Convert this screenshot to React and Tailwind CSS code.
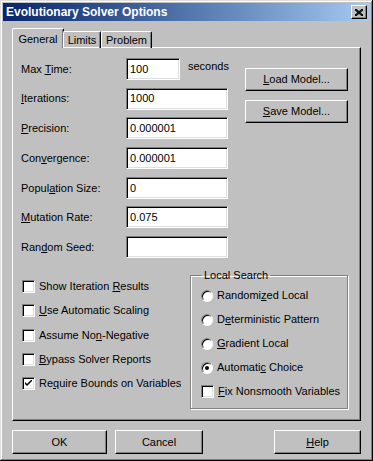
import React from "react";

const raised =
  "border border-t-white border-l-white border-r-black border-b-black shadow-[inset_-1px_-1px_0_#808080]";
const sunken =
  "border border-t-[#808080] border-l-[#808080] border-r-white border-b-white shadow-[inset_1px_1px_0_#000,inset_-1px_-1px_0_#dfdfdf]";

const Btn = ({ children, className = "" }) => (
  <div
    className={`${raised} bg-[#c0c0c0] flex items-center justify-center text-black ${className}`}
  >
    {children}
  </div>
);

const Field = ({ label, value, width = "w-[102px]", extra }) => (
  <div className="flex items-center h-[22px]">
    <div className="w-[105px]">{label}</div>
    <div className={`${sunken} bg-white h-[22px] ${width} flex items-center pl-[3px]`}>
      {value}
    </div>
    {extra}
  </div>
);

const Check = ({ checked, label }) => (
  <div className="flex items-center h-[13px] gap-[4px] whitespace-nowrap leading-[13px]">
    <div className={`${sunken} bg-white w-[13px] h-[13px] shrink-0 flex items-center justify-center`}>
      {checked && (
        <svg width="7" height="7" viewBox="0 0 7 7">
          <path d="M0 2 L0 4 L2 6 L7 1 L7 -1 L2 4 Z" fill="#000" />
        </svg>
      )}
    </div>
    <div>{label}</div>
  </div>
);

const Radio = ({ checked, label }) => (
  <div className="flex items-center h-[13px] gap-[4px] whitespace-nowrap leading-[13px]">
    <div className="w-[12px] h-[12px] shrink-0 rounded-full bg-white border border-t-[#808080] border-l-[#808080] border-r-white border-b-white shadow-[inset_1px_1px_0_#000] flex items-center justify-center">
      {checked && <div className="w-[4px] h-[4px] rounded-full bg-black" />}
    </div>
    <div>{label}</div>
  </div>
);

export default function App() {
  return (
    <div
      className="w-[373px] h-[461px] bg-[#c0c0c0] p-[3px] flex flex-col text-[11px] text-black shadow-[inset_-1px_-1px_0_#000,inset_1px_1px_0_#dfdfdf,inset_-2px_-2px_0_#808080,inset_2px_2px_0_#fff]"
      style={{ fontFamily: '"Liberation Sans", Arial, sans-serif' }}
    >
      {/* title bar */}
      <div className="h-[18px] flex items-center justify-between bg-gradient-to-r from-[#0a246a] to-[#a6caf0] pl-[3px] pr-[3px]">
        <span className="text-white font-bold text-[12px]">Evolutionary Solver Options</span>
        <Btn className="w-[16px] h-[14px]">
          <svg width="8" height="7" viewBox="0 0 8 7">
            <path d="M0 0 L8 7 M8 0 L0 7 M1 0 L8 6 M0 1 L7 7 M7 0 L0 6 M8 1 L1 7" stroke="#000" strokeWidth="1" />
          </svg>
        </Btn>
      </div>

      <div className="flex-1 flex flex-col px-[9px] pt-[7px] pb-[5px]">
        {/* tabs */}
        <div className="flex items-end h-[20px] relative z-10 -mb-[1px]">
          <div className="h-[20px] w-[52px] bg-[#c0c0c0] border border-b-0 border-t-white border-l-white border-r-black shadow-[inset_-1px_0_0_#808080] rounded-t-[2px] flex items-start justify-center pt-[2px]">
            General
          </div>
          <div className="h-[17px] w-[38px] border border-b-0 border-t-white border-l-white border-r-black shadow-[inset_-1px_0_0_#808080] rounded-t-[2px] flex items-center justify-center -ml-[1px]">
            Limits
          </div>
          <div className="h-[17px] w-[51px] border border-b-0 border-t-white border-l-white border-r-black shadow-[inset_-1px_0_0_#808080] rounded-t-[2px] flex items-center justify-center">
            Problem
          </div>
        </div>

        {/* panel */}
        <div className={`${raised} h-[374px] pl-[8px] pt-[10px] flex flex-col`}>
          <div className="flex">
            <div className="flex flex-col gap-[7.7px]">
              <Field
                label={<>Max <u>T</u>ime:</>}
                value="100"
                width="w-[54px]"
                extra={<span className="ml-[8px] -mt-[6px]">seconds</span>}
              />
              <Field label={<><u>I</u>terations:</>} value="1000" />
              <Field label={<><u>P</u>recision:</>} value="0.000001" />
              <Field label={<>Con<u>v</u>ergence:</>} value="0.000001" />
              <Field label={<>Popul<u>a</u>tion Size:</>} value="0" />
              <Field label={<><u>M</u>utation Rate:</>} value="0.075" />
              <Field label={<>Ran<u>d</u>om Seed:</>} value="" />
            </div>
            <div className="ml-auto mr-[12px] mt-[10px] flex flex-col gap-[9px]">
              <Btn className="w-[103px] h-[23px]">
                <span><u>L</u>oad Model...</span>
              </Btn>
              <Btn className="w-[103px] h-[23px]">
                <span><u>S</u>ave Model...</span>
              </Btn>
            </div>
          </div>

          <div className="flex mt-[9px]">
            <div className="flex flex-col gap-[11.3px] pl-[1px] pt-[13px]">
              <Check label={<>Show Iteration <u>R</u>esults</>} />
              <Check label={<><u>U</u>se Automatic Scaling</>} />
              <Check label={<>Assume No<u>n</u>-Negative</>} />
              <Check label={<><u>B</u>ypass Solver Reports</>} />
              <Check checked label={<>Re<u>q</u>uire Bounds on Variables</>} />
            </div>
            <fieldset className="ml-auto mr-[12px] w-[158px] h-[142px] border border-[#808080] shadow-[inset_1px_1px_0_#fff,1px_1px_0_#fff] pl-[10px] pr-0">
              <legend className="px-[2px] ml-[1px] leading-[16px]">Local Search</legend>
              <div className="flex flex-col gap-[11px] pt-[6px]">
                <Radio label={<>Randomi<u>z</u>ed Local</>} />
                <Radio label={<>D<u>e</u>terministic Pattern</>} />
                <Radio label={<><u>G</u>radient Local</>} />
                <Radio checked label={<>Automati<u>c</u> Choice</>} />
                <Check label={<><u>F</u>ix Nonsmooth Variables</>} />
              </div>
            </fieldset>
          </div>
        </div>

        {/* bottom buttons */}
        <div className="flex mt-[9px]">
          <Btn className="w-[95px] h-[24px]">OK</Btn>
          <Btn className="w-[88px] h-[24px] ml-[8px]">Cancel</Btn>
          <Btn className="w-[87px] h-[24px] ml-auto">
            <span><u>H</u>elp</span>
          </Btn>
        </div>
      </div>
    </div>
  );
}
